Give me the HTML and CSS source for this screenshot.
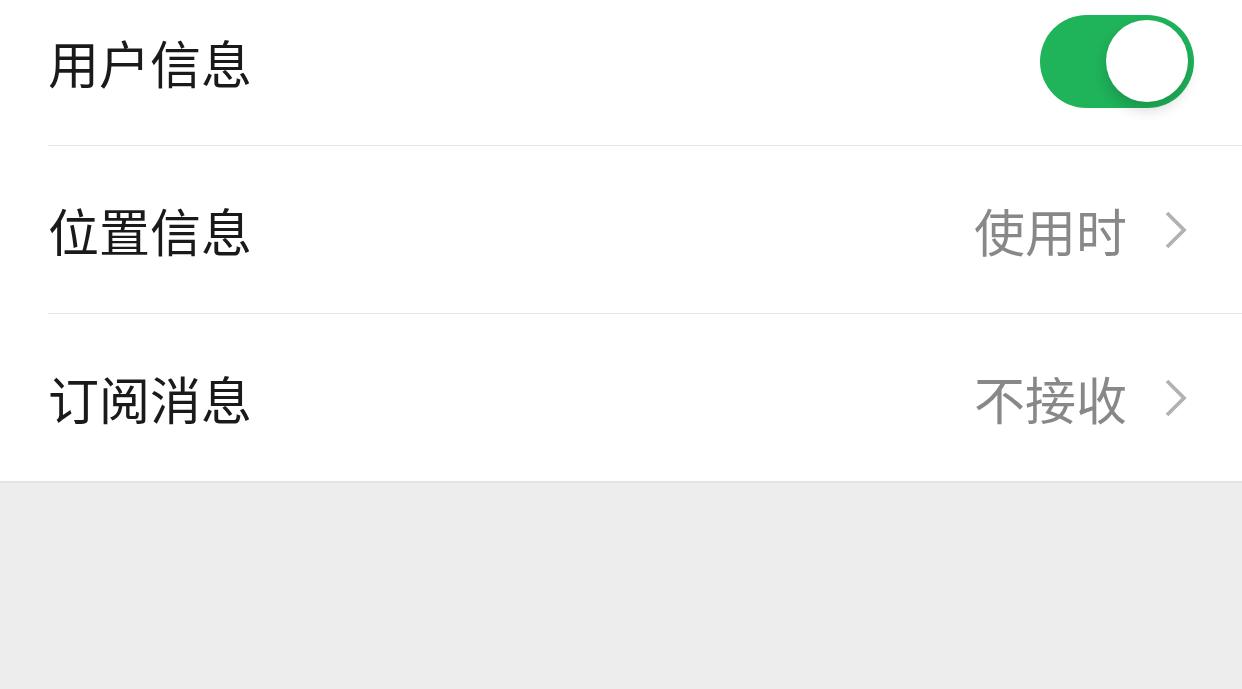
FILE: index.html
```html
<!DOCTYPE html>
<html lang="zh-CN">
<head>
    <meta charset="UTF-8">
    <title>设置</title>
    <link rel="stylesheet" href="styles.css">
</head>
<body>
    <ul class="list">
        <li class="row">
            <span class="label">用户信息</span>
            <span class="switch on"><i class="knob"></i></span>
        </li>
        <li class="row">
            <span class="label">位置信息</span>
            <span class="value">使用时</span>
            <svg class="arrow" width="26" height="40" viewBox="0 0 26 40"><path d="M4 3 L21 20 L4 37" fill="none" stroke="#b2b2b2" stroke-width="3.8"/></svg>
        </li>
        <li class="row">
            <span class="label">订阅消息</span>
            <span class="value">不接收</span>
            <svg class="arrow" width="26" height="40" viewBox="0 0 26 40"><path d="M4 3 L21 20 L4 37" fill="none" stroke="#b2b2b2" stroke-width="3.8"/></svg>
        </li>
    </ul>
</body>
</html>
```

FILE: styles.css
```css
*{margin:0;padding:0;box-sizing:border-box;}
html,body{height:100%;}
body{background:#ededed;font-family:"Noto Sans CJK SC","Liberation Sans",sans-serif;overflow:hidden;}
.list{list-style:none;background:#fff;margin-top:-22px;padding-left:48px;border-bottom:2px solid #e3e3e3;}
.row{display:flex;align-items:center;height:168px;padding-right:48px;border-bottom:1px solid #e5e5e5;}
.row:last-child{border-bottom:none;height:167px;}
.label{flex:1;font-size:51px;color:#1a1a1a;}
.value{font-size:51px;color:#888;margin-right:36px;}
.arrow{display:block;margin-right:5px;}
.switch{width:154px;height:93px;border-radius:47px;background:#1fb35a;position:relative;display:block;}
.switch .knob{position:absolute;right:6px;top:5px;width:82px;height:82px;border-radius:50%;background:#fff;box-shadow:0 8px 14px rgba(0,0,0,.16);}
```
